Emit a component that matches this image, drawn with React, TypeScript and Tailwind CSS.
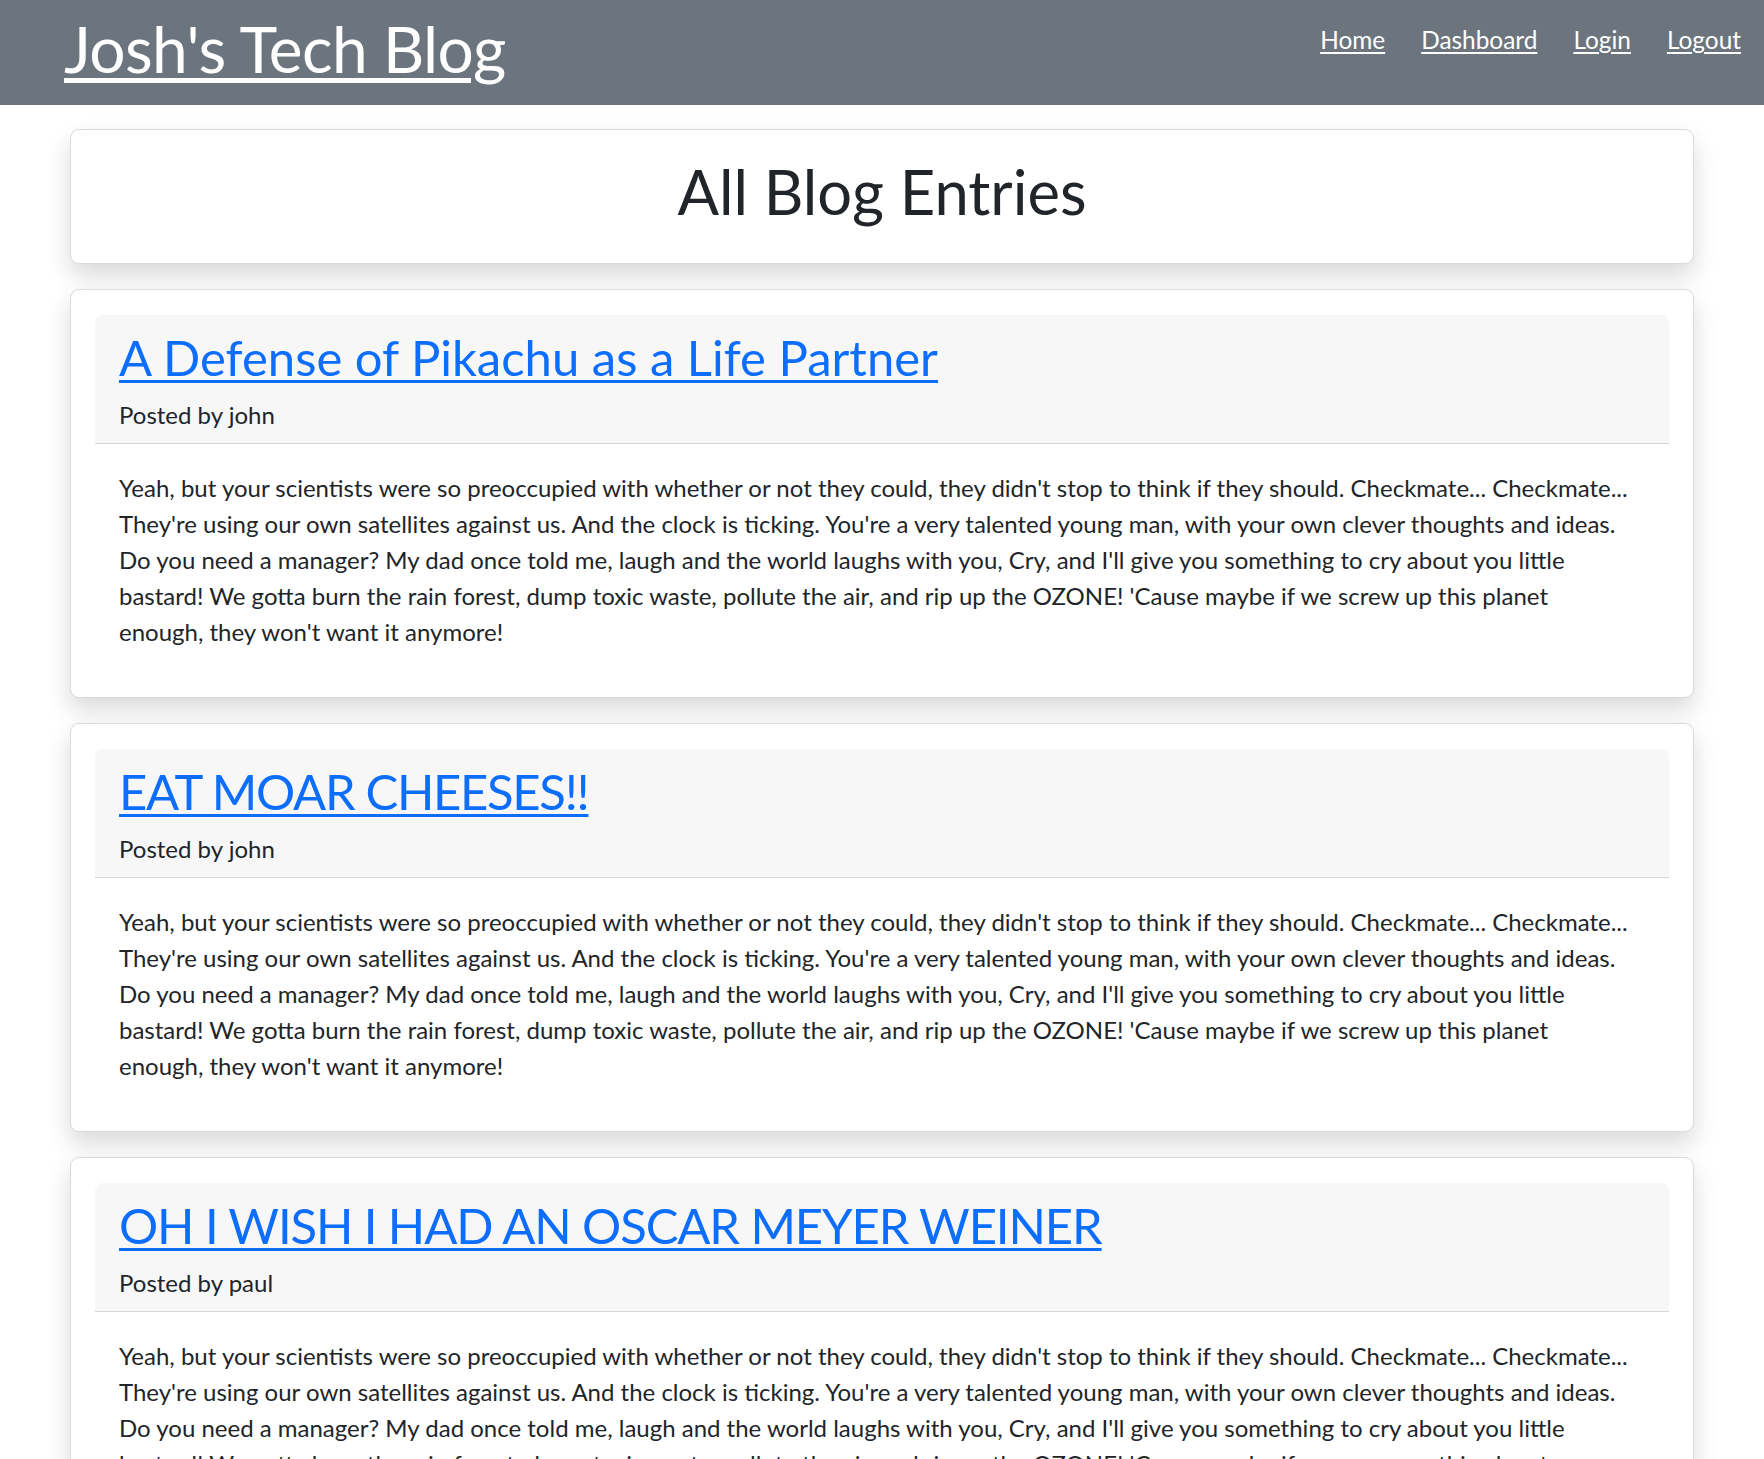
import React from "react";

const BODY_LINES = [
  "Yeah, but your scientists were so preoccupied with whether or not they could, they didn't stop to think if they should. Checkmate... Checkmate...",
  "They're using our own satellites against us. And the clock is ticking. You're a very talented young man, with your own clever thoughts and ideas.",
  "Do you need a manager? My dad once told me, laugh and the world laughs with you, Cry, and I'll give you something to cry about you little",
  "bastard! We gotta burn the rain forest, dump toxic waste, pollute the air, and rip up the OZONE! 'Cause maybe if we screw up this planet",
  "enough, they won't want it anymore!",
];

const POSTS = [
  { title: "A Defense of Pikachu as a Life Partner", author: "john", tracking: "tracking-[0px]" },
  { title: "EAT MOAR CHEESES!!", author: "john", tracking: "tracking-[-1.3px]" },
  { title: "OH I WISH I HAD AN OSCAR MEYER WEINER", author: "paul", tracking: "tracking-[-1.1px]" },
];

function PostCard({ title, author, tracking }: { title: string; author: string; tracking: string }) {
  return (
    <div className="bg-white border border-[#dadada] rounded-[9px] shadow-[0_12px_24px_rgba(0,0,0,0.15)] pt-[25px] px-[24px] pb-[47px]">
      <div className="bg-[#f7f7f7] rounded-t-[8px] border-b border-[#d6d6d6] px-[24px] pt-[12px] pb-[10px]">
        <a
          href="#"
          className={`block w-fit text-[49px] leading-[60px] text-[#0d6efd] underline decoration-[3px] underline-offset-[4px] ${tracking}`}
        >
          {title}
        </a>
        <p className="mt-[10px] text-[24px] leading-[36px] text-[#212529]">Posted by {author}</p>
      </div>
      <p className="pt-[26px] px-[24px] text-[24px] leading-[36px] text-[#212529] whitespace-nowrap">
        {BODY_LINES.map((l, i) => (
          <React.Fragment key={i}>
            {l}
            {i < BODY_LINES.length - 1 && <br />}
          </React.Fragment>
        ))}
      </p>
    </div>
  );
}

export default function App() {
  return (
    <div className="min-h-screen bg-white text-[#212529]" style={{ fontFamily: "Lato, 'Open Sans', sans-serif" }}>
      <header className="h-[105px] bg-[#6c757d] flex justify-between items-start pl-[64px] pr-[23px]">
        <a
          href="#"
          className="pt-[10px] text-[64px] leading-[77px] tracking-[-0.6px] text-white underline decoration-[5px] underline-offset-[5px]"
        >
          Josh's Tech Blog
        </a>
        <nav className="flex gap-[36px] pt-[22px] text-[24.4px] leading-[36px]">
          <a href="#" className="text-white underline decoration-[2px] underline-offset-[3px]">Home</a>
          <a href="#" className="text-white underline decoration-[2px] underline-offset-[3px]">Dashboard</a>
          <a href="#" className="text-white underline decoration-[2px] underline-offset-[3px]">Login</a>
          <a href="#" className="text-white underline decoration-[2px] underline-offset-[3px]">Logout</a>
        </nav>
      </header>
      <main className="px-[70px] pt-[24px] pb-[40px] flex flex-col gap-[25px]">
        <div className="bg-white border border-[#dadada] rounded-[9px] shadow-[0_12px_24px_rgba(0,0,0,0.15)] pt-[24px] pb-[35px] text-center">
          <h1 className="text-[61.5px] leading-[74px] text-[#212529]">All Blog Entries</h1>
        </div>
        {POSTS.map((p) => (
          <PostCard key={p.title} title={p.title} author={p.author} tracking={p.tracking} />
        ))}
      </main>
    </div>
  );
}
